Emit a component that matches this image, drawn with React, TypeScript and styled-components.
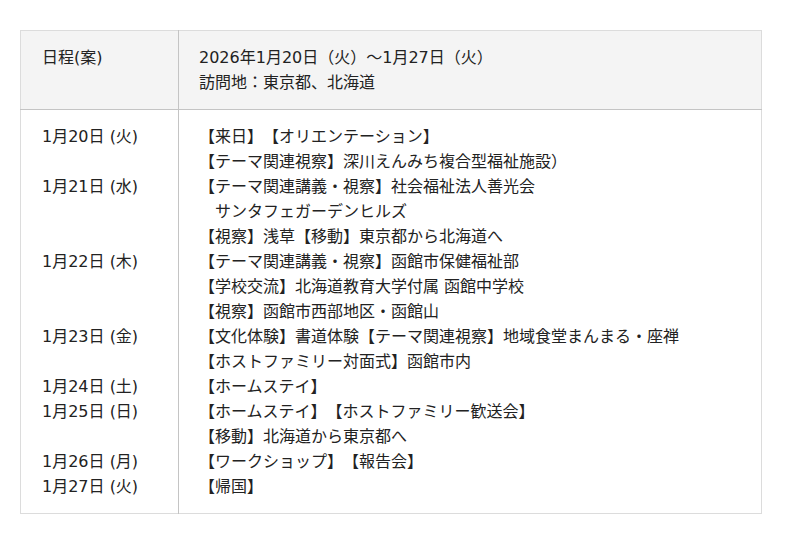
import React from "react";
import styled, { createGlobalStyle } from "styled-components";

const Global = createGlobalStyle`
  html, body { margin: 0; padding: 0; background: #fff; }
  body {
    font-family: "DejaVu Sans", "Noto Sans CJK JP", sans-serif;
    color: #222;
  }
`;

const Page = styled.div`
  padding: 30px 38px 30px 20px;
`;

const Table = styled.table`
  width: 742px;
  border-collapse: collapse;
  border: 1px solid #dcdcdc;
  font-size: 16px;
  line-height: 25px;
  text-spacing-trim: space-all;
`;

const HeadRow = styled.tr`
  background: #f4f4f4;
  border-bottom: 1px solid #c4c4c4;
`;

const LabelCell = styled.td`
  width: 158px;
  box-sizing: border-box;
  vertical-align: top;
  padding: 14px 10px 14px 21px;
  border-right: 1px solid #c4c4c4;
`;

const ContentCell = styled.td`
  vertical-align: top;
  padding: 14px 10px 14px 20px;
`;

const Lines = styled.div`
  display: flex;
  flex-direction: column;
`;

const Line = styled.div`
  white-space: pre;
  height: 25px;
`;

type Item = { date?: string; text: string };

const items: Item[] = [
  { date: "1月20日 (火)", text: "【来日】【オリエンテーション】" },
  { text: "【テーマ関連視察】深川えんみち複合型福祉施設）" },
  { date: "1月21日 (水)", text: "【テーマ関連講義・視察】社会福祉法人善光会" },
  { text: "　サンタフェガーデンヒルズ" },
  { text: "【視察】浅草【移動】東京都から北海道へ" },
  { date: "1月22日 (木)", text: "【テーマ関連講義・視察】函館市保健福祉部" },
  { text: "【学校交流】北海道教育大学付属 函館中学校" },
  { text: "【視察】函館市西部地区・函館山" },
  { date: "1月23日 (金)", text: "【文化体験】書道体験【テーマ関連視察】地域食堂まんまる・座禅" },
  { text: "【ホストファミリー対面式】函館市内" },
  { date: "1月24日 (土)", text: "【ホームステイ】" },
  { date: "1月25日 (日)", text: "【ホームステイ】【ホストファミリー歓送会】" },
  { text: "【移動】北海道から東京都へ" },
  { date: "1月26日 (月)", text: "【ワークショップ】【報告会】" },
  { date: "1月27日 (火)", text: "【帰国】" },
];

export default function App() {
  return (
    <>
      <Global />
      <Page>
        <Table>
          <tbody>
            <HeadRow>
              <LabelCell>日程(案)</LabelCell>
              <ContentCell>
                <Lines>
                  <Line>2026年1月20日（火）～1月27日（火）</Line>
                  <Line>訪問地：東京都、北海道</Line>
                </Lines>
              </ContentCell>
            </HeadRow>
            <tr>
              <LabelCell>
                <Lines>
                  {items.map((it, i) => (
                    <Line key={i}>{it.date ?? ""}</Line>
                  ))}
                </Lines>
              </LabelCell>
              <ContentCell>
                <Lines>
                  {items.map((it, i) => (
                    <Line key={i}>{it.text}</Line>
                  ))}
                </Lines>
              </ContentCell>
            </tr>
          </tbody>
        </Table>
      </Page>
    </>
  );
}
